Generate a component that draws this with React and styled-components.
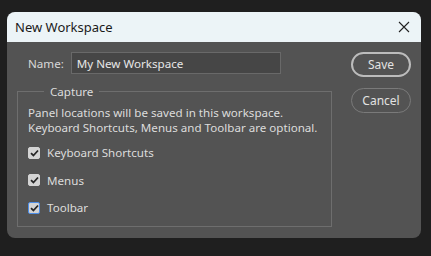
import React from 'react'
import styled, { createGlobalStyle } from 'styled-components'

const GlobalStyle = createGlobalStyle`
  html, body {
    margin: 0;
    padding: 0;
    background: #1f1f1f;
    width: 431px;
    height: 256px;
    overflow: hidden;
  }
  * { box-sizing: border-box; }
`

const Screen = styled.div`
  padding: 12px 10px 0 7px;
  font-family: "Noto Sans", "Open Sans", sans-serif;
`

const Dialog = styled.div`
  width: 414px;
  height: 226px;
  background: #535353;
  border-radius: 8px;
  overflow: hidden;
  display: flex;
  flex-direction: column;
`

const TitleBar = styled.div`
  height: 30px;
  flex-shrink: 0;
  background: #ecf4f7;
  display: flex;
  align-items: center;
  justify-content: space-between;
  padding: 0 10px 0 8px;
`

const Title = styled.div`
  font-size: 13px;
  color: #1a1a1a;
`

const CloseButton = styled.div`
  width: 14px;
  height: 14px;
  display: flex;
  align-items: center;
  justify-content: center;
`

const Body = styled.div`
  flex: 1;
  display: flex;
  padding: 10px 10px 11px 10px;
  gap: 19px;
`

const MainColumn = styled.div`
  display: flex;
  flex-direction: column;
  width: 315px;
`

const NameRow = styled.div`
  display: flex;
  align-items: center;
  gap: 7px;
  padding-left: 11px;
`

const Label = styled.label`
  font-size: 11.6px;
  color: #d8d8d8;
`

const Input = styled.div`
  width: 210px;
  height: 22px;
  background: #464646;
  border: 1px solid #696969;
  color: #e6e6e6;
  font-size: 11.6px;
  display: flex;
  align-items: center;
  padding-left: 5px;
`

const Group = styled.fieldset`
  margin: 10px 0 0 0;
  border: 1px solid #6e6e6e;
  padding: 6px 10px 0 10px;
  flex: 1;
  min-height: 0;
`

const Legend = styled.legend`
  font-size: 11.6px;
  color: #dcdcdc;
  padding: 0 6px;
  margin-left: 16px;
`

const Hint = styled.p`
  margin: 0 0 4px 0;
  font-size: 11.6px;
  line-height: 15px;
  color: #dcdcdc;
  white-space: nowrap;
`

const CheckRow = styled.div`
  display: flex;
  align-items: center;
  gap: 7px;
  height: 27.5px;
  font-size: 11.6px;
  color: #dcdcdc;
`

const Box = styled.span`
  width: 12px;
  height: 12px;
  border-radius: 2px;
  background: #d4d4d4;
  border: 1px solid ${({ focused }) => (focused ? '#4d8ee8' : '#d4d4d4')};
  display: flex;
  align-items: center;
  justify-content: center;
`

const ButtonColumn = styled.div`
  display: flex;
  flex-direction: column;
  gap: 11px;
`

const Button = styled.div`
  width: 60px;
  height: 25px;
  border-radius: 13px;
  border: ${({ primary }) => (primary ? '2px solid #bcbcbc' : '1px solid #7a7a7a')};
  color: #e2e2e2;
  font-size: 12px;
  display: flex;
  align-items: center;
  justify-content: center;
`

const Check = ({ label, focused }) => (
  <CheckRow>
    <Box focused={focused}>
      <svg width="9" height="8" viewBox="0 0 9 8">
        <path d="M1 4.2 L3.4 6.5 L8 1.5" stroke="#262626" strokeWidth="1.8" fill="none" />
      </svg>
    </Box>
    {label}
  </CheckRow>
)

export default function App() {
  return (
    <Screen>
      <GlobalStyle />
      <Dialog>
        <TitleBar>
          <Title>New Workspace</Title>
          <CloseButton>
            <svg width="12" height="12" viewBox="0 0 12 12">
              <path d="M1 1 L11 11 M11 1 L1 11" stroke="#222" strokeWidth="1.1" />
            </svg>
          </CloseButton>
        </TitleBar>
        <Body>
          <MainColumn>
            <NameRow>
              <Label>Name:</Label>
              <Input>My New Workspace</Input>
            </NameRow>
            <Group>
              <Legend>Capture</Legend>
              <Hint>
                Panel locations will be saved in this workspace.
                <br />
                Keyboard Shortcuts, Menus and Toolbar are optional.
              </Hint>
              <Check label="Keyboard Shortcuts" />
              <Check label="Menus" />
              <Check label="Toolbar" focused />
            </Group>
          </MainColumn>
          <ButtonColumn>
            <Button primary>Save</Button>
            <Button>Cancel</Button>
          </ButtonColumn>
        </Body>
      </Dialog>
    </Screen>
  )
}
